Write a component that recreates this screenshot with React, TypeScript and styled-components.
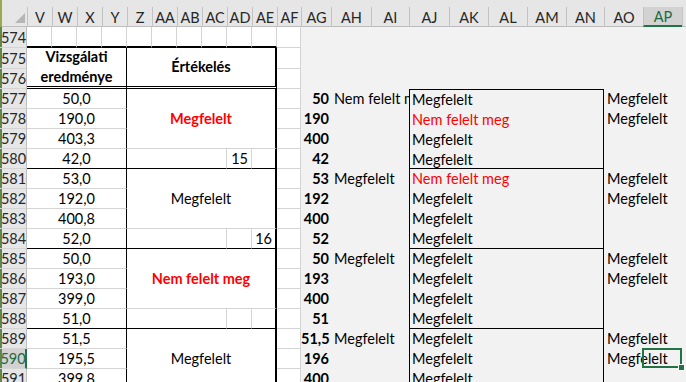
import React from "react";
import styled, { createGlobalStyle, css } from "styled-components";

const GlobalStyle = createGlobalStyle`
  html, body { margin: 0; padding: 0; background: #f2f2f2; overflow: hidden; }
  body { font-family: Lato, "Liberation Sans", sans-serif; }
`;

type Place = { $c: number; $cs?: number; $r: number; $rs?: number };
const place = css<Place>`
  grid-column: ${(p) => p.$c} / span ${(p) => p.$cs ?? 1};
  grid-row: ${(p) => p.$r} / span ${(p) => p.$rs ?? 1};
`;

type B = "grid" | "thin" | "thick" | "double" | "none";
const border = (b?: B) =>
  b === "thin"
    ? "1px solid #000"
    : b === "thick"
    ? "2px solid #000"
    : b === "double"
    ? "3px double #000"
    : b === "none"
    ? "none"
    : "1px solid #d4d4d4";

const GREEN = "#217346";

const Sheet = styled.div`
  display: grid;
  grid-template-columns: 27px repeat(10, 25px) 24px 30px 40px 38px 40px 39px 39px 39px 38px 39px 39px 1fr;
  grid-template-rows: 27px 21px 21px 20px repeat(16, 20px);
  width: 686px;
  height: 382px;
  overflow: hidden;
  background: #f2f2f2;
  font-family: Lato, "Liberation Sans", sans-serif;
  font-size: 14.5px;
  color: #000;
`;

const HeaderBand = styled.div`
  grid-column: 1 / -1;
  grid-row: 1;
  background: #e6e6e6;
  border-bottom: 1px solid #bdbdbd;
  box-sizing: border-box;
`;

const Corner = styled.div`
  grid-column: 1;
  grid-row: 1;
  display: flex;
  align-items: flex-end;
  justify-content: flex-end;
  padding: 0 2px 4px 0;
  box-shadow: inset 2px 0 0 #9aa84e;
`;

const ColHead = styled.div<{ $c: number; $sel?: boolean }>`
  grid-column: ${(p) => p.$c};
  grid-row: 1;
  align-self: end;
  height: 20px;
  box-sizing: border-box;
  display: flex;
  align-items: center;
  justify-content: center;
  border-left: 1px solid #c3c3c3;
  background: ${(p) => (p.$sel ? "#d2d2d2" : "transparent")};
  border-bottom: ${(p) => (p.$sel ? `2px solid ${GREEN}` : "1px solid #bdbdbd")};
  color: ${(p) => (p.$sel ? "#1c6a3f" : "#262626")};
  font-size: 14.5px;
  padding-top: 1px;
`;

const RowHead = styled.div<{ $r: number; $sel?: boolean }>`
  grid-column: 1;
  grid-row: ${(p) => p.$r};
  box-sizing: border-box;
  display: flex;
  align-items: center;
  justify-content: center;
  background: ${(p) => (p.$sel ? "#d2d2d2" : "#e6e6e6")};
  border-bottom: 1px solid #d4d4d4;
  border-right: ${(p) => (p.$sel ? `2px solid ${GREEN}` : "1px solid #bdbdbd")};
  color: ${(p) => (p.$sel ? "#1c6a3f" : "#262626")};
  box-shadow: inset 2px 0 0 #5e8748;
  font-size: 14.5px;
  padding-left: 1px;
`;

type CellStyle = {
  $right?: B;
  $bottom?: B;
  $align?: "left" | "center" | "right";
  $bold?: boolean;
  $red?: boolean;
};

const Cell = styled.div<Place & CellStyle>`
  ${place}
  box-sizing: border-box;
  background: #fff;
  border-right: ${(p) => border(p.$right)};
  border-bottom: ${(p) => border(p.$bottom)};
  display: flex;
  align-items: center;
  justify-content: ${(p) =>
    p.$align === "right" ? "flex-end" : p.$align === "left" ? "flex-start" : "center"};
  padding: 0 3px;
  font-weight: ${(p) => (p.$bold ? 700 : 400)};
  color: ${(p) => (p.$red ? "#ff0000" : "#000")};
  white-space: nowrap;
  line-height: 20px;
  overflow: hidden;
`;

const TwoLine = styled.span`
  display: block;
  text-align: center;
  line-height: 20px;
`;

const Num = styled.div<Place>`
  ${place}
  text-align: right;
  font-weight: 700;
  padding-right: 2px;
  line-height: 20px;
  white-space: nowrap;
`;

const Note = styled.div<Place & { $clip?: boolean }>`
  ${place}
  padding-left: 3px;
  line-height: 20px;
  white-space: nowrap;
  overflow: ${(p) => (p.$clip ? "hidden" : "visible")};
`;

const Box = styled.div<Place & { $first?: boolean }>`
  ${place}
  box-sizing: border-box;
  border: 1px solid #000;
  border-top: ${(p) => (p.$first ? "1px solid #000" : "none")};
  display: grid;
  grid-template-rows: repeat(4, 1fr);
  overflow: hidden;
`;

const BoxLine = styled.div<{ $red?: boolean }>`
  padding-left: 2px;
  line-height: 20px;
  white-space: nowrap;
  color: ${(p) => (p.$red ? "#ff0000" : "#000")};
`;

const Selection = styled.div<Place>`
  ${place}
  position: relative;
  box-sizing: border-box;
  border: 2px solid ${GREEN};
  margin: -1px 0 1px -1px;
  &::after {
    content: "";
    position: absolute;
    right: -5px;
    bottom: -5px;
    width: 5px;
    height: 5px;
    background: ${GREEN};
    border: 1px solid #fff;
  }
`;

const COLS = [
  "V", "W", "X", "Y", "Z", "AA", "AB", "AC", "AD", "AE", "AF",
  "AG", "AH", "AI", "AJ", "AK", "AL", "AM", "AN", "AO", "AP",
];

type Group = {
  vals: string[];
  label: string;
  labelRed: boolean;
  labelBold: boolean;
  ad: string;
  ae: string;
  ag: string[];
  ah: string;
  aj: [string, boolean][];
  ao: string[];
};

const M: [string, boolean] = ["Megfelelt", false];
const N: [string, boolean] = ["Nem felelt meg", true];

const groups: Group[] = [
  {
    vals: ["50,0", "190,0", "403,3", "42,0"],
    label: "Megfelelt", labelRed: true, labelBold: true, ad: "15", ae: "",
    ag: ["50", "190", "400", "42"], ah: "Nem felelt meg",
    aj: [M, N, M, M], ao: ["Megfelelt", "Megfelelt", "", ""],
  },
  {
    vals: ["53,0", "192,0", "400,8", "52,0"],
    label: "Megfelelt", labelRed: false, labelBold: false, ad: "", ae: "16",
    ag: ["53", "192", "400", "52"], ah: "Megfelelt",
    aj: [N, M, M, M], ao: ["Megfelelt", "Megfelelt", "", ""],
  },
  {
    vals: ["50,0", "193,0", "399,0", "51,0"],
    label: "Nem felelt meg", labelRed: true, labelBold: true, ad: "", ae: "",
    ag: ["50", "193", "400", "51"], ah: "Megfelelt",
    aj: [M, M, M, M], ao: ["Megfelelt", "Megfelelt", "", ""],
  },
  {
    vals: ["51,5", "195,5", "399,8", "52,0"],
    label: "Megfelelt", labelRed: false, labelBold: false, ad: "", ae: "",
    ag: ["51,5", "196", "400", "52"], ah: "Megfelelt",
    aj: [M, M, M, M], ao: ["Megfelelt", "Megfelelt", "", ""],
  },
];

const rowLine = (n: number) => (n === 574 ? 2 : n - 575 + 3);

const CornerMark = () => (
  <svg width="10" height="10" viewBox="0 0 10 10">
    <polygon points="10,0 10,10 0,10" fill="#b6b6b6" />
  </svg>
);

export default function App() {
  const cells: React.ReactNode[] = [];

  for (let c = 2; c <= 12; c++) {
    cells.push(
      <Cell key={`r574-${c}`} $c={c} $r={2} $bottom={c <= 11 ? "thick" : "grid"} />
    );
  }
  cells.push(
    <Cell key="h-vy" $c={2} $cs={4} $r={3} $rs={2} $right="thin" $bottom="double" $bold>
      <TwoLine>
        Vizsgálati
        <br />
        eredménye
      </TwoLine>
    </Cell>
  );
  cells.push(
    <Cell key="h-z" $c={6} $cs={6} $r={3} $rs={2} $right="thick" $bottom="double" $bold>
      Értékelés
    </Cell>
  );
  cells.push(<Cell key="h-af1" $c={12} $r={3} />);
  cells.push(<Cell key="h-af2" $c={12} $r={4} />);

  groups.forEach((g, gi) => {
    const base = 5 + gi * 4;
    g.vals.forEach((v, i) => {
      cells.push(
        <Cell key={`v-${gi}-${i}`} $c={2} $cs={4} $r={base + i} $right="thin" $bottom={i === 3 ? "thin" : "grid"}>
          {v}
        </Cell>
      );
      cells.push(<Cell key={`af-${gi}-${i}`} $c={12} $r={base + i} />);
      cells.push(
        <Num key={`ag-${gi}-${i}`} $c={13} $r={base + i}>
          {g.ag[i]}
        </Num>
      );
      if (g.ao[i]) {
        cells.push(
          <Note key={`ao-${gi}-${i}`} $c={21} $cs={2} $r={base + i}>
            {g.ao[i]}
          </Note>
        );
      }
    });
    cells.push(
      <Cell key={`lab-${gi}`} $c={6} $cs={6} $r={base} $rs={3} $right="thick" $bold={g.labelBold} $red={g.labelRed}>
        {g.label}
      </Cell>
    );
    cells.push(<Cell key={`zc-${gi}`} $c={6} $cs={4} $r={base + 3} $bottom="thin" />);
    cells.push(
      <Cell key={`ad-${gi}`} $c={10} $r={base + 3} $bottom="thin" $align="right">
        {g.ad}
      </Cell>
    );
    cells.push(
      <Cell key={`ae-${gi}`} $c={11} $r={base + 3} $bottom="thin" $right="thick" $align="right">
        {g.ae}
      </Cell>
    );
    cells.push(
      <Note key={`ah-${gi}`} $c={14} $cs={2} $r={base} $clip>
        {g.ah}
      </Note>
    );
    cells.push(
      <Box key={`box-${gi}`} $c={16} $cs={5} $r={base} $rs={4} $first={gi === 0}>
        {g.aj.map(([t, red], i) => (
          <BoxLine key={i} $red={red}>
            {t}
          </BoxLine>
        ))}
      </Box>
    );
  });

  return (
    <>
      <GlobalStyle />
      <Sheet>
        <HeaderBand />
        <Corner>
          <CornerMark />
        </Corner>
        {COLS.map((name, i) => (
          <ColHead key={name} $c={i + 2} $sel={name === "AP"}>
            {name}
          </ColHead>
        ))}
        <ColHead $c={23} />
        {Array.from({ length: 19 }, (_, i) => 574 + i).map((n) => (
          <RowHead key={n} $r={rowLine(n)} $sel={n === 590}>
            {n}
          </RowHead>
        ))}
        {cells}
        <Selection $c={22} $r={rowLine(590)} />
      </Sheet>
    </>
  );
}
